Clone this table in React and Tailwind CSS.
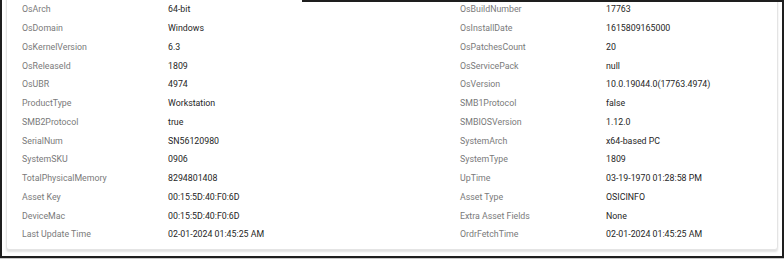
import React from 'react';

const left = [
  ['OsArch', '64-bit'],
  ['OsDomain', 'Windows'],
  ['OsKernelVersion', '6.3'],
  ['OsReleaseId', '1809'],
  ['OsUBR', '4974'],
  ['ProductType', 'Workstation'],
  ['SMB2Protocol', 'true'],
  ['SerialNum', 'SN56120980'],
  ['SystemSKU', '0906'],
  ['TotalPhysicalMemory', '8294801408'],
  ['Asset Key', '00:15:5D:40:F0:6D'],
  ['DeviceMac', '00:15:5D:40:F0:6D'],
  ['Last Update Time', '02-01-2024 01:45:25 AM'],
];

const right = [
  ['OsBuildNumber', '17763'],
  ['OsInstallDate', '1615809165000'],
  ['OsPatchesCount', '20'],
  ['OsServicePack', 'null'],
  ['OsVersion', '10.0.19044.0(17763.4974)'],
  ['SMB1Protocol', 'false'],
  ['SMBIOSVersion', '1.12.0'],
  ['SystemArch', 'x64-based PC'],
  ['SystemType', '1809'],
  ['UpTime', '03-19-1970 01:28:58 PM'],
  ['Asset Type', 'OSICINFO'],
  ['Extra Asset Fields', 'None'],
  ['OrdrFetchTime', '02-01-2024 01:45:25 AM'],
];

function Row({ label, value }) {
  return (
    <div className="flex items-center h-[18.75px]">
      <span className="w-[146px] shrink-0 text-[#7a7a7a]">{label}</span>
      <span className="text-[#262626]">{value}</span>
    </div>
  );
}

export default function App() {
  return (
    <div className="w-[784px] h-[259px] bg-[#c8c8c8] overflow-hidden" style={{ fontFamily: 'Roboto, "Liberation Sans", sans-serif' }}>
      <div className="relative h-[258px] bg-white border-x-2 border-b-2 border-[#1e1e1e] overflow-hidden">
        <div className="absolute top-0 left-[300px] right-0 h-[2px] bg-[#1e1e1e]" />
        <div className="ml-[4px] mr-[4px] mt-[-10px] h-[260px] border border-[#e4e4e4] rounded-[3px] shadow-[0_2px_2px_rgba(0,0,0,0.12)] bg-white">
          <div className="flex pl-[15px] pt-[9.4px] text-[8.8px] leading-none">
            <div className="w-[438px] flex flex-col">
              {left.map(([l, v]) => <Row key={l} label={l} value={v} />)}
            </div>
            <div className="flex-1 flex flex-col">
              {right.map(([l, v]) => <Row key={l} label={l} value={v} />)}
            </div>
          </div>
        </div>
      </div>
    </div>
  );
}
